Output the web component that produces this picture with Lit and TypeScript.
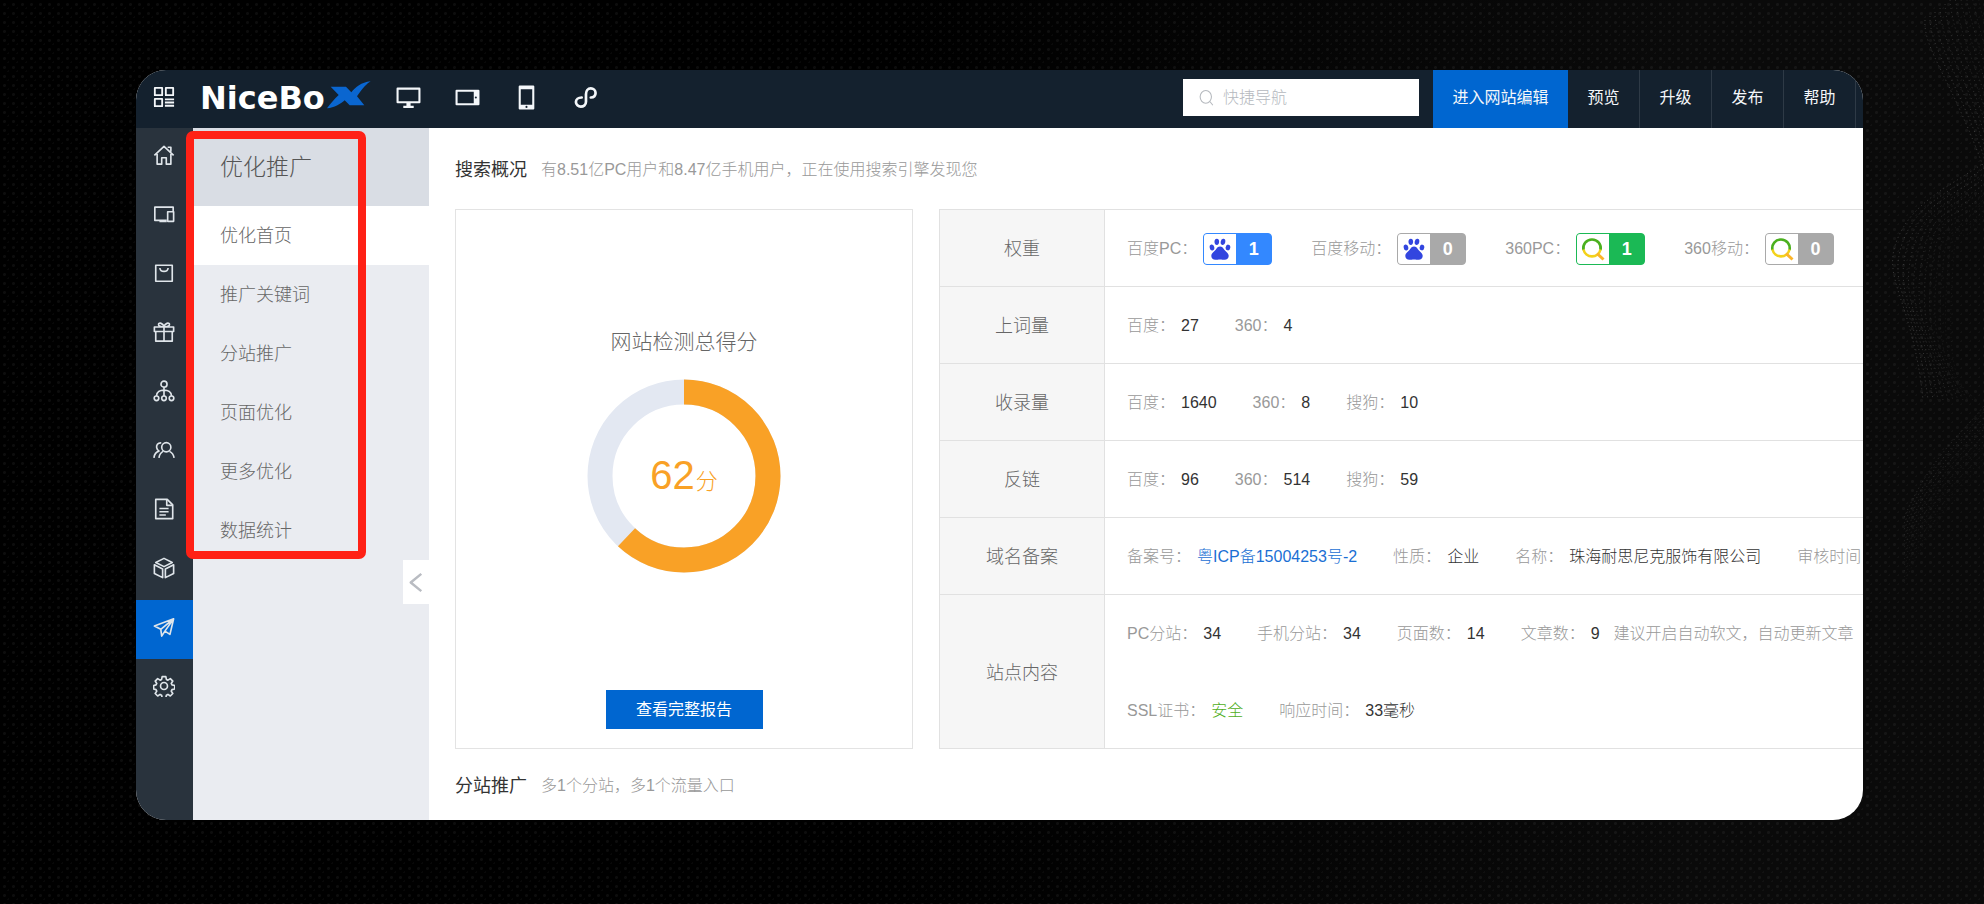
import { LitElement, html, css, svg, nothing, TemplateResult } from "lit";
import { customElement, property } from "lit/decorators.js";
import { classMap } from "lit/directives/class-map.js";

type Glyph = TemplateResult;

const icon = (size: number, body: Glyph, stroke = 1.5) => html`<svg
  width=${size}
  height=${size}
  viewBox="0 0 24 24"
  fill="none"
  stroke="currentColor"
  stroke-width=${stroke}
  stroke-linejoin="round"
  aria-hidden="true"
>${body}</svg>`;

const glyphs = {
  grid: svg`<path d="M2 2h8v8H2zM14 2h8v8h-8zM2 14h8v8H2zM13 14.500h10M13 18h10M13 21.500h10"/>`,
  monitor: svg`<path d="M1.500 3.500h21v13h-21z"/><path d="M10 17h4v3h3v2H7v-2h3z" fill="currentColor" stroke="none"/>`,
  tablet: svg`<path d="M1.500 5.500h21v13h-21z"/><path d="M18 5h5v14h-5z" fill="currentColor" stroke="none"/><circle cx="20" cy="12" r="1" fill="#14212e" stroke="none"/>`,
  phone: svg`<path d="M5.500 1.500h13v21h-13z"/><path d="M5 1h14v3H5zM5 19h14v4H5z" fill="currentColor" stroke="none"/><circle cx="12" cy="21" r="1" fill="#14212e" stroke="none"/>`,
  mini: svg`<path d="M8 12c-3.500 0-6 2-6 4.700S4.500 21.500 7 21.500c3 0 5.500-1.800 5.500-5V8.500c0-3.300 2-6 5-6 2.800 0 5 2 5 4.700 0 2.600-2 4.600-5 4.800" stroke-linecap="round"/>`,
  home: svg`<path d="M1.500 12.500 12 2.500l10.500 10M4.500 11v11h5v-7h5v7h5V11M16 3.500h3.500v5"/>`,
  devices: svg`<path d="M15 19H2V4.500h20V9M7 20h8" /><path d="M16 9.500h6.500V20H16z"/>`,
  bag: svg`<path d="M3 3.500h18v17.500H3z"/><path d="M7.500 6.500c.5 5 8.500 5 9 0"/>`,
  gift: svg`<path d="M1.500 6.500h21v5h-21zM3 11.500h18V22H3zM12 6.500V22M12 6.500C9 6.500 5.500 5.500 6 3.500s5-1.500 6 3zM12 6.500c3 0 6.500-1 6-3s-5-1.500-6 3z"/>`,
  tree: svg`<circle cx="12" cy="4.500" r="3.300"/><circle cx="3.800" cy="20" r="2.500"/><circle cx="12" cy="20" r="2.500"/><circle cx="20.200" cy="20" r="2.500"/><path d="M12 8v9.500M3.800 17.500c0-4.500 4-6.500 8.200-6.500s8.200 2 8.200 6.500"/>`,
  users: svg`<circle cx="14.500" cy="9" r="5"/><path d="M11 13.500C8 15 7 17 6.500 20.500M18 13.500c3 1.500 4.500 4 5 7M9 4.200C5 4 3.500 7 4 9.500c.3 1.700 1 3 2.500 3.700C3 14 1.500 16.500 1 20.500"/>`,
  doc: svg`<path d="M3 1.500h12.500L21.500 7.500V22.500H3z"/><path d="M15 2v6h6M7 11.500h10M7 15h10M7 18.500h7"/>`,
  cube: svg`<path d="M12 1.500 21 6l-9 4.500L3 6zM1.500 8.500l9 4.500v9.500l-9-4.500zM22.500 8.500l-9 4.500v9.500l9-4.500z"/>`,
  plane: svg`<path d="M1.500 11 22.500 3l-4 17-5.500-3.500L9.500 22l-1-7.500zM22.500 3 8.500 14.500M22.500 3 13 16.500"/>`,
  gear: svg`<circle cx="12" cy="12" r="3.800"/><path d="M10 1.800h4l.6 3 1.700.8 2.600-1.700 2.700 2.700-1.700 2.600.8 1.600 3 .7v3.800l-3 .7-.8 1.600 1.700 2.600-2.700 2.700-2.600-1.700-1.700.8-.6 3h-4l-.6-3-1.700-.8-2.600 1.700-2.700-2.700 1.700-2.600-.8-1.600-2.600-.7v-3.800l2.600-.7.8-1.600-1.700-2.600 2.700-2.700 2.600 1.700 1.700-.8z"/>`,
  search: svg`<ellipse cx="11" cy="11" rx="8" ry="9"/><path d="m17 18 4 5"/>`,
  back: svg`<path d="M17 3 6 12l11 9"/>`,
};

const paw = html`<svg width="22" height="22" viewBox="0 0 22 22" fill="#3245df" aria-hidden="true">
  <ellipse cx="3" cy="9.500" rx="2.300" ry="3" transform="rotate(-12 3 9.500)" />
  <ellipse cx="7.800" cy="3.800" rx="2.300" ry="3.100" />
  <ellipse cx="14" cy="3.900" rx="2.300" ry="3.100" transform="rotate(10 14 3.900)" />
  <ellipse cx="19" cy="9.500" rx="2.300" ry="2.900" transform="rotate(8 19 9.500)" />
  <path d="M11 8.600c2 0 2.900 1.300 4.100 2.900 1.600 2 4.600 3.500 4.600 6.500 0 2.300-1.800 3.800-4.100 3.800-1.600 0-2.700-.4-4.600-.4s-3 .4-4.600.4c-2.300 0-4.100-1.500-4.100-3.800 0-3 3-4.500 4.600-6.500 1.200-1.600 2.100-2.900 4.100-2.900z" />
</svg>`;

const lens = html`<svg width="24" height="24" viewBox="0 0 24 24" fill="none" stroke-width="2.600" aria-hidden="true">
  <path d="M2.500 13a8.700 8.700 0 1 1 17 0" stroke="#4bb01f" />
  <path d="M2.500 12.500a8.700 8.700 0 0 0 17 0" stroke="#f3d21a" />
  <path d="m16 16.500 6.500 6" stroke="#fbb429" stroke-width="3" />
</svg>`;

@customElement("weight-badge")
export class WeightBadge extends LitElement {
  @property() engine = "baidu";
  @property({ type: Number }) level = 0;

  static styles = css`
    :host {
      display: inline-flex;
      margin-right: 3px;
    }
    .badge {
      display: flex;
      box-sizing: border-box;
      width: 69px;
      height: 32px;
      overflow: hidden;
      border: 1px solid #a9a9a9;
      border-radius: 4px;
      background: #a9a9a9;
    }
    .baidu {
      border-color: #3388ff;
      background: #3388ff;
    }
    .qihoo {
      border-color: #1bb955;
      background: #1bb955;
    }
    .mark {
      display: grid;
      place-items: center;
      width: 32px;
      background: #fff;
    }
    .level {
      flex: 1;
      color: #fff;
      font: bold 18px/30px "Liberation Sans", sans-serif;
      text-align: center;
    }
  `;

  render() {
    const tone = { baidu: this.level > 0 && this.engine === "baidu", qihoo: this.level > 0 && this.engine === "qihoo" };
    return html`<span class=${classMap({ badge: true, ...tone })}>
      <span class="mark">${this.engine === "baidu" ? paw : lens}</span>
      <span class="level">${this.level}</span>
    </span>`;
  }
}

@customElement("score-ring")
export class ScoreRing extends LitElement {
  @property({ type: Number }) score = 0;

  static styles = css`
    :host {
      display: grid;
      place-items: center;
    }
    .ring,
    .value {
      grid-area: 1 / 1;
    }
    .value {
      padding-top: 4px;
      color: #f9a126;
      font-size: 40px;
      line-height: 48px;
    }
    .unit {
      font-size: 22px;
      margin-left: 1px;
    }
  `;

  render() {
    return html`
      <svg class="ring" width="194" height="194" viewBox="0 0 194 194" fill="none" stroke-width="25" aria-hidden="true">
        <circle cx="97" cy="97" r="84" stroke="#e3e8f2" />
        <circle
          cx="97"
          cy="97"
          r="84"
          stroke="#f9a126"
          pathLength="100"
          stroke-dasharray="${this.score} 100"
          transform="rotate(-90 97 97)"
        />
      </svg>
      <span class="value">${this.score}<span class="unit">分</span></span>
    `;
  }
}

interface Fact {
  label: string;
  value?: string;
  tone?: "link" | "good";
  badge?: [string, number];
  hint?: string;
}

const rail: [string, Glyph][] = [
  ["首页", glyphs.home],
  ["网站", glyphs.devices],
  ["商城", glyphs.bag],
  ["营销", glyphs.gift],
  ["分销", glyphs.tree],
  ["会员", glyphs.users],
  ["表单", glyphs.doc],
  ["应用", glyphs.cube],
  ["推广", glyphs.plane],
  ["设置", glyphs.gear],
];

const menu = ["优化首页", "推广关键词", "分站推广", "页面优化", "更多优化", "数据统计"];

const report: { title: string; lines: Fact[][] }[] = [
  {
    title: "权重",
    lines: [[
      { label: "百度PC：", badge: ["baidu", 1] },
      { label: "百度移动：", badge: ["baidu", 0] },
      { label: "360PC：", badge: ["qihoo", 1] },
      { label: "360移动：", badge: ["qihoo", 0] },
    ]],
  },
  { title: "上词量", lines: [[{ label: "百度：", value: "27" }, { label: "360：", value: "4" }]] },
  {
    title: "收录量",
    lines: [[{ label: "百度：", value: "1640" }, { label: "360：", value: "8" }, { label: "搜狗：", value: "10" }]],
  },
  {
    title: "反链",
    lines: [[{ label: "百度：", value: "96" }, { label: "360：", value: "514" }, { label: "搜狗：", value: "59" }]],
  },
  {
    title: "域名备案",
    lines: [[
      { label: "备案号：", value: "粤ICP备15004253号-2", tone: "link" },
      { label: "性质：", value: "企业" },
      { label: "名称：", value: "珠海耐思尼克服饰有限公司" },
      { label: "审核时间" },
    ]],
  },
  {
    title: "站点内容",
    lines: [
      [
        { label: "PC分站：", value: "34" },
        { label: "手机分站：", value: "34" },
        { label: "页面数：", value: "14" },
        { label: "文章数：", value: "9", hint: "建议开启自动软文，自动更新文章" },
      ],
      [
        { label: "SSL证书：", value: "安全", tone: "good" },
        { label: "响应时间：", value: "33毫秒" },
      ],
    ],
  },
];

@customElement("app-root")
export class AppRoot extends LitElement {
  static styles = css`
    :host {
      display: grid;
      box-sizing: border-box;
      min-height: 100vh;
      padding: 70px 121px 84px 136px;
      overflow: hidden;
      background:
        radial-gradient(circle, rgba(255, 255, 255, 0.05) 1px, transparent 2px) 0 0 / 9px 9px,
        radial-gradient(circle, rgba(255, 255, 255, 0.03) 1px, transparent 1px) 4px 4px / 9px 9px,
        linear-gradient(90deg, #000 0%, #000 45%, #0a0a0a 85%);
      font-family: "Liberation Sans", "Noto Sans CJK SC", sans-serif;
      font-size: 16px;
      font-weight: 300;
      line-height: 24px;
      position: relative;
    }
    * {
      box-sizing: border-box;
    }
    a {
      color: inherit;
      text-decoration: none;
    }
    button {
      border: 0;
      padding: 0;
      font: inherit;
      cursor: pointer;
    }
    svg {
      display: block;
    }
    .waves {
      position: absolute;
      right: 0;
      top: 0;
      pointer-events: none;
    }
    .window {
      display: flex;
      flex-direction: column;
      min-width: 0;
      overflow: hidden;
      border-radius: 30px;
      background: #fff;
      position: relative;
    }
    .topbar {
      display: flex;
      align-items: flex-start;
      height: 58px;
      background: #14212e;
      color: #f4f7fa;
    }
    .apps,
    .device {
      display: grid;
      place-items: center;
      height: 54px;
      background: none;
      color: inherit;
    }
    .apps {
      width: 55px;
    }
    .logo {
      display: flex;
      align-items: center;
      gap: 2px;
      margin: 8px 0 0 9px;
      color: #fff;
      font: bold 32px/40px "DejaVu Sans", sans-serif;
    }
    .logo-mark {
      margin-bottom: 6px;
    }
    .devices {
      display: flex;
      margin-left: 8px;
    }
    .device {
      width: 59px;
    }
    .search {
      display: flex;
      align-items: center;
      gap: 8px;
      width: 236px;
      height: 37px;
      margin: 9px 0 0 auto;
      padding: 0 15px;
      background: #fff;
      color: #b5b9be;
    }
    .query {
      flex: 1;
      min-width: 0;
      border: 0;
      padding: 0;
      outline: 0;
      background: none;
      font: inherit;
      color: #555;
    }
    .query::placeholder {
      color: #b5b9be;
      opacity: 1;
    }
    .actions {
      display: flex;
      margin: 0 7px 0 14px;
      font-weight: 400;
      line-height: 56px;
    }
    .action {
      width: 72px;
      height: 58px;
      border-right: 1px solid #2e3a46;
      text-align: center;
    }
    .edit {
      width: 135px;
      border-right: 0;
      background: #0066d0;
    }
    .body {
      display: flex;
      flex: 1;
      min-height: 0;
    }
    .rail {
      width: 57px;
      flex: none;
      background: #29333d;
      color: #dfe5ea;
    }
    .tool {
      display: grid;
      place-items: center;
      height: 59px;
      padding: 0 2px 5px 0;
    }
    .tool.on {
      background: #0066d0;
    }
    .side {
      display: flex;
      flex-direction: column;
      width: 236px;
      flex: none;
      background: #eaecf1;
      color: #666;
    }
    .side-title {
      margin: 0;
      padding-left: 27px;
      background: #d9dde4;
      color: #555;
      font-size: 23px;
      font-weight: 300;
      line-height: 78px;
    }
    .entry {
      height: 59px;
      padding-left: 27px;
      font-size: 18px;
      line-height: 61px;
    }
    .entry.on {
      background: #fff;
    }
    .collapse {
      display: grid;
      place-items: center;
      align-self: flex-end;
      width: 26px;
      height: 44px;
      background: #fff;
      color: #b9bcc2;
    }
    .callout {
      position: absolute;
      left: 50px;
      top: 61px;
      width: 180px;
      height: 428px;
      border: 8px solid #ff2116;
      border-radius: 7px;
      pointer-events: none;
    }
    .content {
      flex: 1;
      min-width: 0;
      padding-left: 26px;
      overflow: hidden;
    }
    .head {
      display: flex;
      align-items: center;
      gap: 14px;
      height: 81px;
      padding-top: 2px;
      color: #999;
    }
    .head.next {
      height: 71px;
    }
    .head-title {
      margin: 0;
      color: #333;
      font-size: 18px;
      font-weight: 400;
    }
    .panels {
      display: grid;
      grid-template-columns: 458px 1fr;
      gap: 26px;
    }
    .score {
      display: flex;
      flex-direction: column;
      align-items: center;
      padding: 116px 0 19px;
      border: 1px solid #e3e3e3;
      color: #666;
    }
    .score-title {
      margin: 0 0 21px;
      font-size: 21px;
      font-weight: 300;
      line-height: 32px;
    }
    .full {
      width: 157px;
      height: 39px;
      margin-top: auto;
      background: #0066d0;
      color: #fff;
      font-weight: 400;
    }
    .report {
      width: 100%;
      border-collapse: collapse;
      border: 1px solid #e1e1e1;
      border-right: 0;
    }
    .subject {
      width: 165px;
      padding: 2px 0 0;
      border: 1px solid #e1e1e1;
      background: #f6f6f6;
      color: #666;
      font-size: 18px;
      font-weight: 300;
    }
    .facts {
      padding: 0 0 0 22px;
      border-bottom: 1px solid #e1e1e1;
      color: #999;
      max-width: 0;
    }
    .line {
      display: flex;
      align-items: center;
      gap: 36px;
      height: 76px;
      padding-top: 2px;
      overflow: hidden;
      white-space: nowrap;
    }
    .line + .line {
      height: 77px;
    }
    .fact {
      display: flex;
      align-items: center;
      gap: 6px;
      flex: none;
    }
    .value {
      color: #333;
    }
    .value.link {
      color: #1a6fd4;
    }
    .value.good {
      color: #4fae22;
    }
    .hint {
      margin-left: 8px;
    }
  `;

  private fact(f: Fact) {
    return html`<span class="fact">
      <span>${f.label}</span>
      ${f.badge ? html`<weight-badge engine=${f.badge[0]} level=${f.badge[1]}></weight-badge>` : nothing}
      ${f.tone === "link"
        ? html`<a class="value link" href="#">${f.value}</a>`
        : f.value
          ? html`<span class=${classMap({ value: true, good: f.tone === "good" })}>${f.value}</span>`
          : nothing}
      ${f.hint ? html`<span class="hint">${f.hint}</span>` : nothing}
    </span>`;
  }

  render() {
    return html`
      <svg class="waves" width="121" height="904" viewBox="0 0 121 904" fill="none" stroke="#fff" stroke-dasharray="1 3" aria-hidden="true">
        ${Array.from({ length: 12 }, (_, i) => svg`
          <path stroke-opacity=${0.2 - i * 0.012} d="M${62 + i * 5} ${20 - i * 4}C${60 + i * 6} ${50 - i * 2} ${90 + i * 5} 80 125 ${180 - i * 12}" />
          <path stroke-opacity=${0.2 - i * 0.014} d="M125 ${160 + i * 5}C90 ${185 + i * 7} ${50 + i * 4} 200 ${34 + i * 5} ${240 + i * 4}S${50 + i * 4} ${300 + i * 8} ${60 + i * 5} 400" />
          <path stroke-opacity=${0.14 - i * 0.009} d="M125 ${400 + i * 6}C105 ${430 + i * 5} 70 ${450 + i * 6} 40 ${520 + i * 6}" />
        `)}
      </svg>
      <div class="window">
        <header class="topbar">
          <button class="apps" aria-label="应用">${icon(22, glyphs.grid, 2)}</button>
          <a class="logo" href="#" aria-label="NiceBox">
            NiceBo<svg class="logo-mark" width="44" height="28" viewBox="0 0 132 84" aria-hidden="true">
              <path
                fill="#0a66d0"
                d="M11 17h46l16 17C86 18 102 4 131 1 120 8 108 20 90 46l22 27H68L53 58C40 70 22 80 0 82 12 66 22 54 35 42z"
              />
            </svg>
          </a>
          <nav class="devices" aria-label="终端">
            <a class="device" href="#" aria-label="电脑">${icon(25, glyphs.monitor, 2)}</a>
            <a class="device" href="#" aria-label="平板">${icon(25, glyphs.tablet, 2)}</a>
            <a class="device" href="#" aria-label="手机">${icon(25, glyphs.phone, 2)}</a>
            <a class="device" href="#" aria-label="小程序">${icon(23, glyphs.mini, 2.8)}</a>
          </nav>
          <label class="search">
            ${icon(17, glyphs.search, 1.5)}
            <input class="query" type="search" placeholder="快捷导航" aria-label="快捷导航" />
          </label>
          <nav class="actions" aria-label="操作">
            <a class="action edit" href="#">进入网站编辑</a>
            ${["预览", "升级", "发布", "帮助"].map((t) => html`<a class="action" href="#">${t}</a>`)}
          </nav>
        </header>
        <div class="body">
          <nav class="rail" aria-label="主导航">
            ${rail.map(([name, g], i) => html`<a class=${classMap({ tool: true, on: i === 8 })} href="#" aria-label=${name}>${icon(22, g, 1.8)}</a>`)}
          </nav>
          <aside class="side">
            <h2 class="side-title">优化推广</h2>
            ${menu.map((t, i) => html`<a class=${classMap({ entry: true, on: i === 0 })} href="#">${t}</a>`)}
            <button class="collapse" aria-label="收起">${icon(23, glyphs.back, 2.6)}</button>
          </aside>
          <main class="content">
            <header class="head">
              <h3 class="head-title">搜索概况</h3>
              <span>有8.51亿PC用户和8.47亿手机用户，正在使用搜索引擎发现您</span>
            </header>
            <div class="panels">
              <section class="score">
                <h4 class="score-title">网站检测总得分</h4>
                <score-ring score="62"></score-ring>
                <button class="full">查看完整报告</button>
              </section>
              <table class="report">
                <tbody>
                  ${report.map((r) => html`<tr>
                    <th class="subject" scope="row">${r.title}</th>
                    <td class="facts">${r.lines.map((l) => html`<div class="line">${l.map((f) => this.fact(f))}</div>`)}</td>
                  </tr>`)}
                </tbody>
              </table>
            </div>
            <header class="head next">
              <h3 class="head-title">分站推广</h3>
              <span>多1个分站，多1个流量入口</span>
            </header>
          </main>
        </div>
        <div class="callout"></div>
      </div>
    `;
  }
}
